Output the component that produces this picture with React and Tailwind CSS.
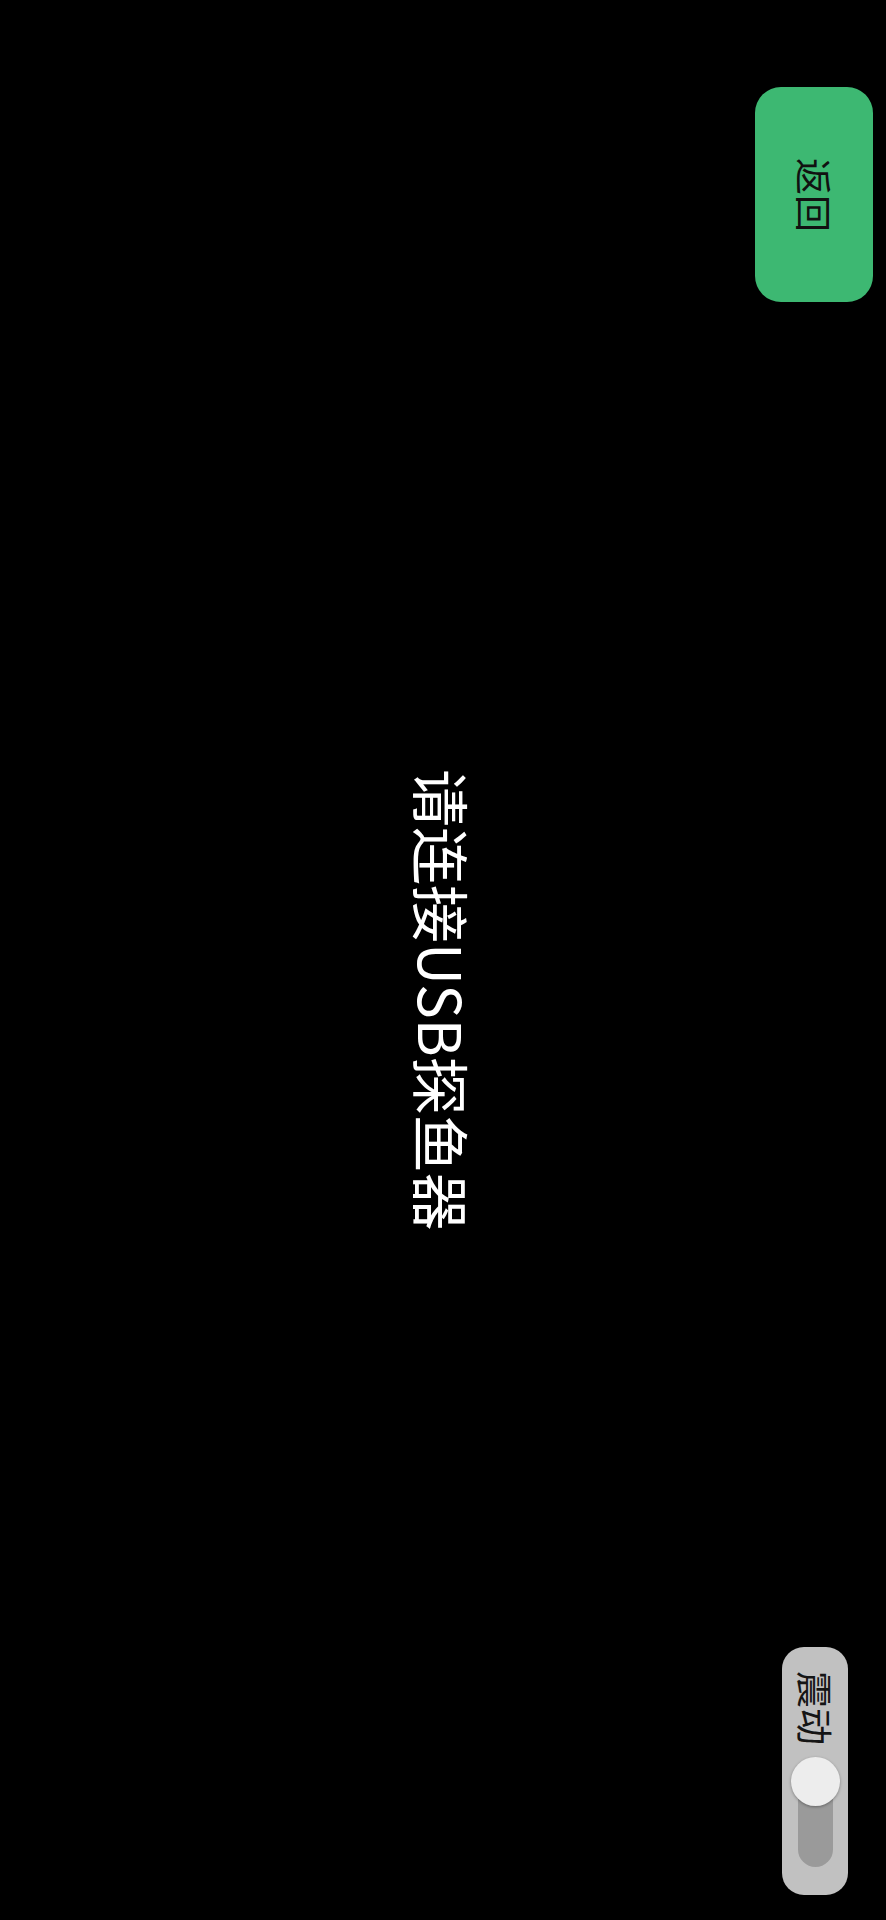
import React from 'react';

const font = { fontFamily: '"Noto Sans CJK SC", "Noto Sans", sans-serif' };

const VibrateSwitch = () => {
  return (
    <div className="flex flex-col items-center w-[66px] pt-[24px] pb-[28px] rounded-[22px] bg-[#c1c1c1]">
      <span className="[writing-mode:vertical-rl] [text-orientation:sideways] text-[37px] leading-none text-[#151515]">
        震动
      </span>
      <div className="relative mt-[12px] w-[49px] h-[110px] flex justify-center">
        <div className="mt-[8px] w-[35px] h-[102px] rounded-full bg-[#9a9a9a]" />
        <div className="absolute top-0 left-0 w-[49px] h-[49px] rounded-full bg-[#ededed] shadow-[0_1px_3px_rgba(0,0,0,0.35)]" />
      </div>
    </div>
  );
};

export default function App() {
  return (
    <div className="w-[886px] h-[1920px] bg-black flex flex-col" style={font}>
      <div className="flex justify-end pt-[87px] pr-[13px]">
        <button className="w-[118px] h-[215px] rounded-[26px] bg-[#3db872] flex items-center justify-center">
          <span className="[writing-mode:vertical-rl] [text-orientation:sideways] text-[37px] leading-none text-[#111111]">
            返回
          </span>
        </button>
      </div>
      <div className="flex-1 flex items-center justify-center pt-[50px]">
        <span className="[writing-mode:vertical-rl] [text-orientation:sideways] text-[58px] leading-none text-white">
          请连接USB探鱼器
        </span>
      </div>
      <div className="flex justify-end pr-[38px] pb-[25px]">
        <VibrateSwitch />
      </div>
    </div>
  );
}
